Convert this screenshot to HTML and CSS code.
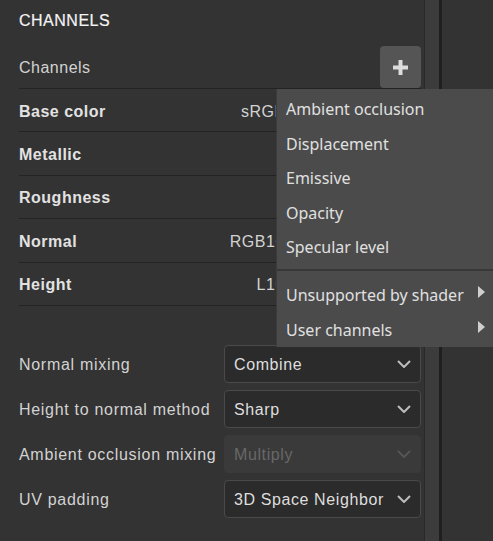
FILE: index.html
```html
<!DOCTYPE html>
<html lang="en">
   <head>
      <title>Texture set settings - channels</title>
      <link rel="stylesheet" href="styles.css">
   </head>
   <body>
      <div class="app">
      	<div class="panel">
      		<div class="title">CHANNELS</div>

      		<div class="head-row">
      			<span class="label">Channels</span>
      			<div class="add">
      				<svg width="15" height="15" viewBox="0 0 15 15"><path d="M7.5 0v15M0 7.5h15" stroke="#dcdcdc" stroke-width="4"/></svg>
      			</div>
      		</div>

      		<div class="channel"><span class="name">Base color</span><span class="value">sRGB8</span></div>
      		<div class="channel"><span class="name">Metallic</span></div>
      		<div class="channel"><span class="name">Roughness</span></div>
      		<div class="channel"><span class="name">Normal</span><span class="value">RGB16F</span></div>
      		<div class="channel"><span class="name">Height</span><span class="value">L16F</span></div>

      		<div class="settings">
      			<div class="setting">
      				<span class="label">Normal mixing</span>
      				<div class="select"><span>Combine</span><svg width="14" height="8" viewBox="0 0 14 8"><path d="M1 1l6 6 6-6" fill="none" stroke="#bdbdbd" stroke-width="2"/></svg></div>
      			</div>
      			<div class="setting">
      				<span class="label">Height to normal method</span>
      				<div class="select"><span>Sharp</span><svg width="14" height="8" viewBox="0 0 14 8"><path d="M1 1l6 6 6-6" fill="none" stroke="#bdbdbd" stroke-width="2"/></svg></div>
      			</div>
      			<div class="setting">
      				<span class="label">Ambient occlusion mixing</span>
      				<div class="select disabled"><span>Multiply</span><svg width="14" height="8" viewBox="0 0 14 8"><path d="M1 1l6 6 6-6" fill="none" stroke="#555" stroke-width="2"/></svg></div>
      			</div>
      			<div class="setting">
      				<span class="label">UV padding</span>
      				<div class="select"><span>3D Space Neighbor</span><svg width="14" height="8" viewBox="0 0 14 8"><path d="M1 1l6 6 6-6" fill="none" stroke="#bdbdbd" stroke-width="2"/></svg></div>
      			</div>
      		</div>
      	</div>

      	<div class="scrollbar"></div>
      	<div class="divider"></div>
      	<div class="right"></div>

      	<!-- add channel popup -->
      	<div class="menu">
      		<div class="item">Ambient occlusion</div>
      		<div class="item">Displacement</div>
      		<div class="item">Emissive</div>
      		<div class="item">Opacity</div>
      		<div class="item">Specular level</div>
      		<div class="sep"></div>
      		<div class="item">Unsupported by shader<span class="arrow"></span></div>
      		<div class="item">User channels<span class="arrow"></span></div>
      	</div>
      </div>
   </body>
</html>
```

FILE: styles.css
```css
body{
	margin:0;
	padding:0;
	background:#333;
	font-family:"Liberation Sans",Arial,sans-serif;
	font-size:16px;
}
.app{
	position:relative;
	display:flex;
	height:541px;
	overflow:hidden;
}
.panel{
	box-sizing:border-box;
	width:425px;
	flex:none;
	padding:0 3px 0 19px;
	background:#333;
	border-right:1px solid #292929;
}
.title{
	height:46px;
	line-height:42px;
	color:#f4f4f4;
	letter-spacing:0.5px;
	-webkit-text-stroke:0.2px #f4f4f4;
}
.head-row{
	display:flex;
	align-items:center;
	justify-content:space-between;
	height:42px;
	border-bottom:1px solid #232323;
}
.label{
	color:#d2d2d2;
	letter-spacing:0.5px;
	padding-top:2px;
}
.add{
	width:41px;
	height:42px;
	border-radius:4px;
	background:#555;
	display:flex;
	align-items:center;
	justify-content:center;
}
.channel{
	box-sizing:border-box;
	display:flex;
	align-items:center;
	height:43.4px;
	padding-top:3px;
	border-bottom:1px solid #232323;
}
.channel .name{
	flex:1;
	font-weight:bold;
	color:#e2e2e2;
	letter-spacing:0.5px;
}
.channel .value{
	width:80px;
	margin-right:126px;
	text-align:right;
	color:#d2d2d2;
	letter-spacing:0.5px;
}
.settings{
	margin-top:39px;
	display:flex;
	flex-direction:column;
	gap:7px;
}
.setting{
	display:flex;
	align-items:center;
	height:38px;
}
.setting .label{
	flex:1;
	letter-spacing:0.7px;
}
.select{
	box-sizing:border-box;
	width:197px;
	height:38px;
	display:flex;
	align-items:center;
	justify-content:space-between;
	padding:0 9px 0 9px;
	background:#2b2b2b;
	border:1px solid #4a4a4a;
	border-radius:4px;
	color:#dedede;
	letter-spacing:0.6px;
}
.select span{
	padding-top:2px;
}
.select.disabled{
	background:#3a3a3a;
	border-color:#3a3a3a;
	color:#686868;
}
.scrollbar{
	width:14px;
	flex:none;
	background:#3c3c3c;
}
.divider{
	width:3px;
	flex:none;
	background:#1f1f1f;
}
.right{
	flex:1;
	background:#333;
}
.menu{
	position:absolute;
	left:276px;
	top:89px;
	box-sizing:border-box;
	width:217px;
	height:258px;
	padding-top:2.75px;
	background:#4b4b4b;
	border-left:1px solid #3c3c3c;
	font-family:"Noto Sans",sans-serif;
	font-size:16px;
	color:#e0e0e0;
}
.menu .item{
	display:flex;
	align-items:center;
	justify-content:space-between;
	height:34.5px;
	padding:0 8px 0 9px;
}
.menu .sep{
	height:2px;
	margin:4.75px 0 6.75px;
	background:#383838;
}
.arrow{
	width:0;
	height:0;
	border-top:6px solid transparent;
	border-bottom:6px solid transparent;
	border-left:7px solid #cfcfcf;
	margin-top:-6px;
}
```
